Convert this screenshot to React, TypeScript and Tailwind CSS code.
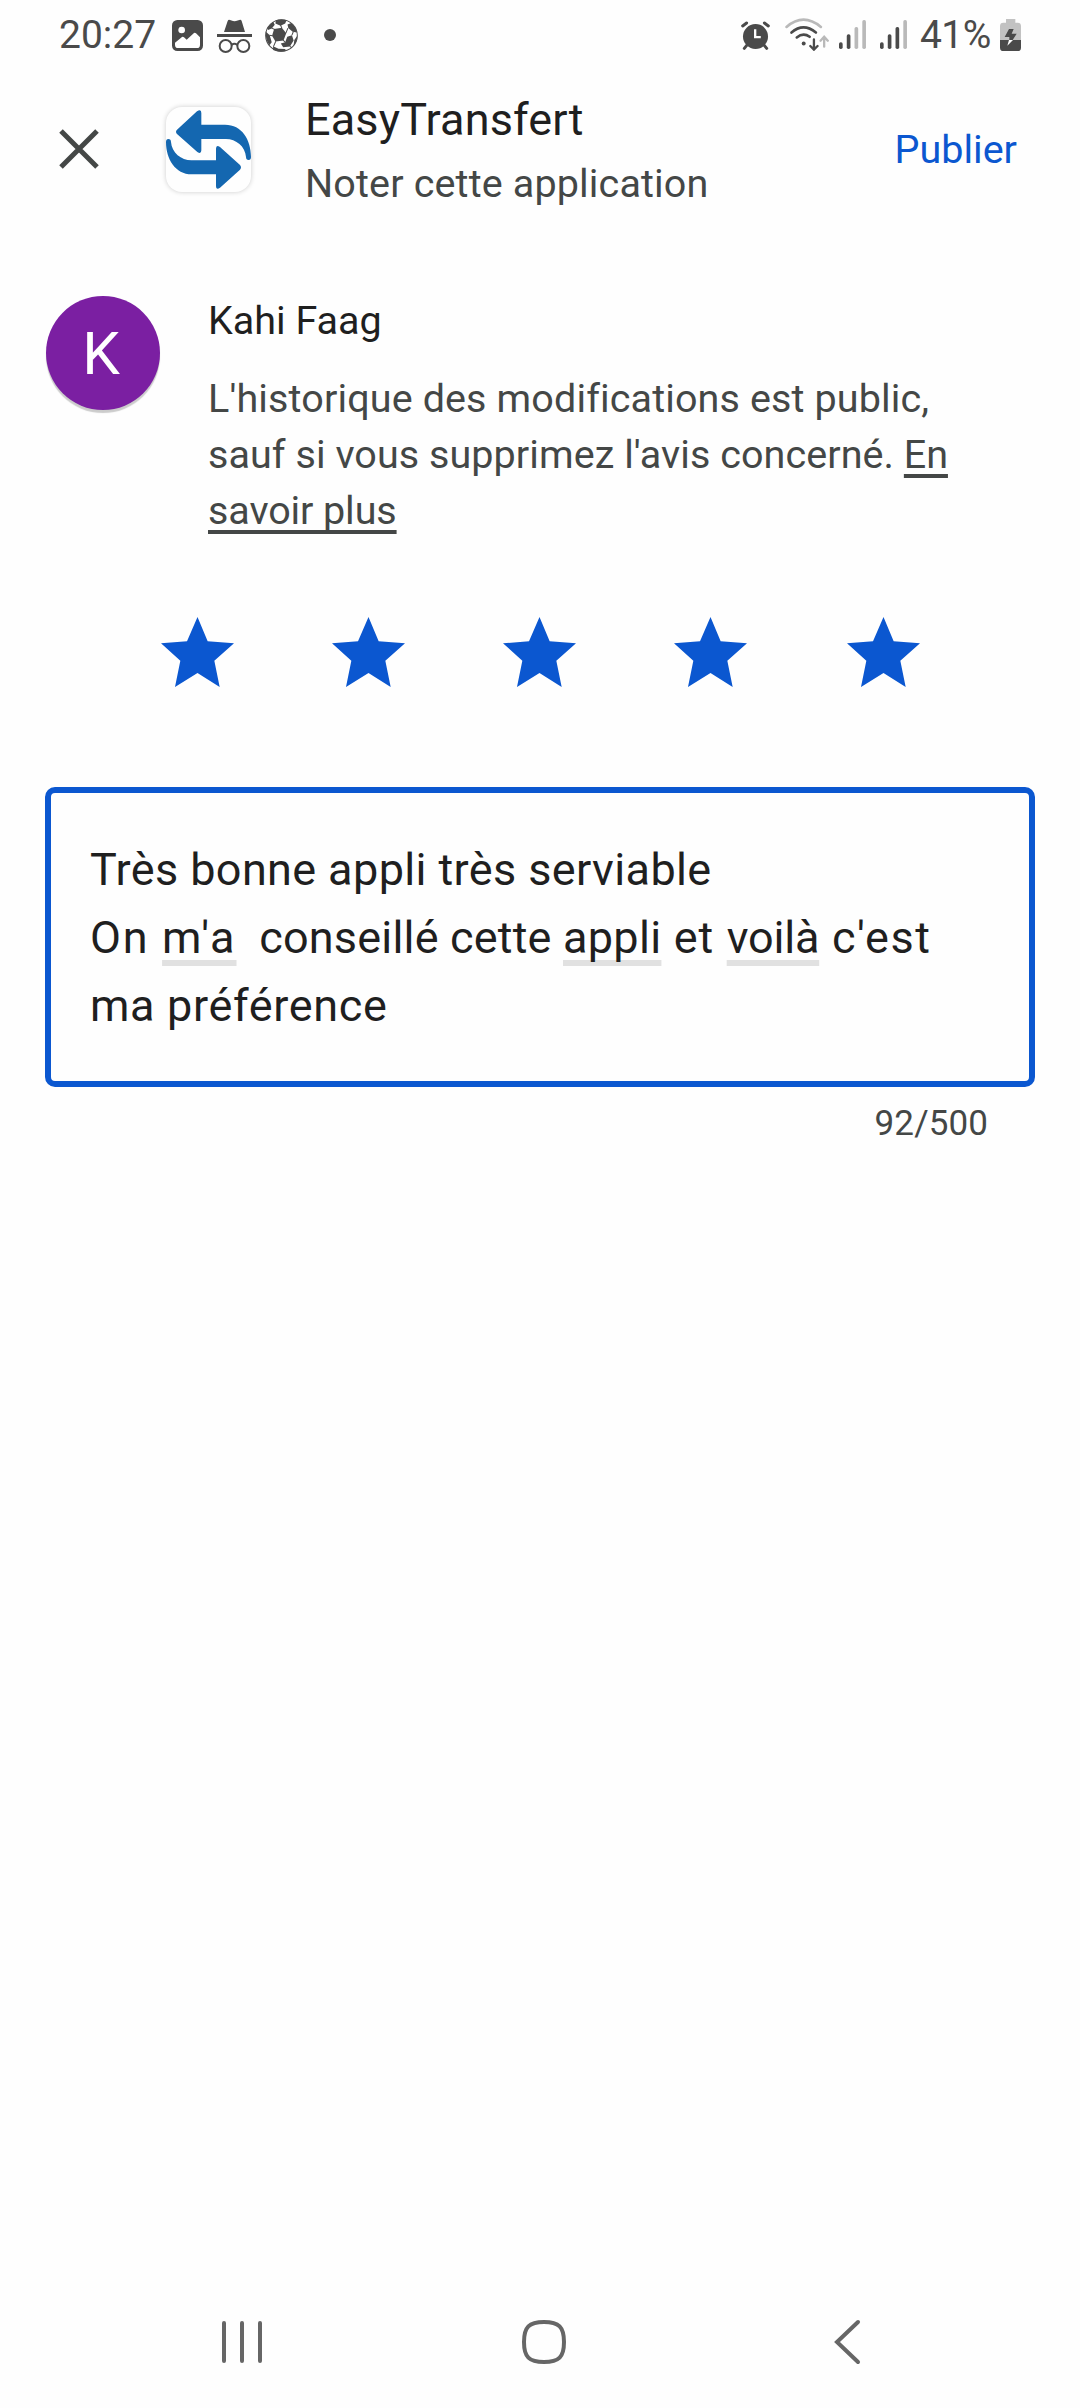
const StatusBar = () => {
  return (
    <div className="flex h-[70px] items-start justify-between pl-[59px] pr-[59px] text-[#4a4a4a]">
      <div className="flex items-start">
        <span className="mt-2.5 w-[113px] whitespace-nowrap text-[39px] leading-[50px]">20:27</span>
        {/* Picture */}
        <svg className="mt-5 h-[31px] w-[31px]" viewBox="0 0 93 93">
          <rect width="93" height="93" rx="16" fill="#4a4a4a" />
          <circle cx="29" cy="30" r="10" fill="white" />
          <path
            d="M9 68L30 51Q33 49 36 52L44 59L66 39Q69 37 72 40L84 52V74Q84 84 75 84H18Q9 84 9 74Z"
            fill="white"
          />
        </svg>
        {/* Incognito */}
        <svg className="ml-3.5 mt-[19px] h-[34px] w-[35px]" viewBox="0 0 105 102">
          <path
            d="M21 39L32 6Q34 1 39 3L48 6Q53 7 57 6L67 3Q72 1 74 6L84 39Z"
            fill="#4a4a4a"
          />
          <rect y="45" width="105" height="9" fill="#4a4a4a" />
          <g fill="none" stroke="#4a4a4a" strokeWidth="6">
            <circle cx="26" cy="81" r="18" />
            <circle cx="79" cy="81" r="18" />
            <path d="M44 78Q52 71 61 78" />
          </g>
        </svg>
        {/* Football */}
        <svg className="ml-[13px] mt-[19px] h-[33px] w-[33px]" viewBox="0 0 98 98">
          <circle cx="49" cy="49" r="47" fill="white" stroke="#4a4a4a" strokeWidth="3" />
          <g fill="#4a4a4a">
            <path d="M27 30L50 26L63 42L55 64L31 67L21 50Z" />
            <path d="M32 4Q48 -1 64 4L60 13L46 20L31 13Z" />
            <path d="M67 16L78 12Q92 24 95 40L82 38L69 27Z" />
            <path d="M66 53L80 48L85 64L74 82L54 84L47 73L60 69Z" />
            <path d="M2 37L14 48L20 69L13 78Q1 62 2 37Z" />
            <path d="M8 26Q15 14 25 9L29 17L20 28L9 33Z" />
            <path d="M24 81L40 88L60 89L62 95Q42 101 24 92Z" />
            <path d="M87 62L96 50Q96 66 85 79Z" />
          </g>
          <path
            d="M62 42L68 27M50 27L46 18M29 31L20 27M22 50L13 48M32 66L25 82M54 63L60 69M80 48L84 38M74 81L80 86"
            stroke="#4a4a4a"
            strokeWidth="3"
          />
        </svg>
        <span className="ml-[26px] mt-[29px] h-3 w-3 rounded-full bg-[#4a4a4a]" />
      </div>

      <div className="flex items-start">
        {/* Alarm */}
        <svg className="mt-[21px] h-[29px] w-[29px]" viewBox="0 0 88 86">
          <circle cx="44" cy="46" r="38" fill="#4a4a4a" />
          <path
            d="M5 14L17 5M71 5L83 14M18 72L10 82M70 72L78 82"
            stroke="#4a4a4a"
            strokeWidth="9"
            strokeLinecap="round"
          />
          <path d="M43 24V48H60" fill="none" stroke="white" strokeWidth="7" />
        </svg>
        {/* Wi-Fi */}
        <svg className="ml-[15px] mt-[18px] h-[33px] w-[44px]" viewBox="0 0 132 100">
          <g fill="none" strokeWidth="8" strokeLinecap="round">
            <path d="M4 27Q55 -17 108 27" stroke="#b9b9b9" />
            <path d="M19 44Q55 13 93 44" stroke="#4a4a4a" />
            <path d="M35 59Q55 43 74 57" stroke="#4a4a4a" />
            <path d="M118 87V58M107 69L118 57L129 69" stroke="#b9b9b9" strokeWidth="7" />
            <path d="M87 65V95M76 85L87 96L98 85" stroke="#4a4a4a" strokeWidth="7" />
          </g>
          <circle cx="56" cy="77" r="6" fill="#4a4a4a" />
        </svg>
        <SignalBars strong={2} className="ml-2.5" />
        <SignalBars strong={3} className="ml-3.5" />
        <span className="ml-[13px] mt-2.5 w-[80px] whitespace-nowrap text-[39px] leading-[50px] tracking-[-0.6px]">
          41%
        </span>
        {/* Battery */}
        <svg className="mt-[19px] h-8 w-[21px]" viewBox="0 0 63 96">
          <path d="M18 0H46V11H53Q63 11 63 21V64H0V21Q0 11 10 11H18Z" fill="#c2c2c2" />
          <path d="M0 63H63V86Q63 96 53 96H10Q0 96 0 86Z" fill="#4a4a4a" />
          <path d="M27 30H41L35 44H50L38 63H28V54H14Z" fill="#4a4a4a" />
          <path d="M27 63H39L22 80Z" fill="white" />
        </svg>
      </div>
    </div>
  );
};

interface SignalBarsProps {
  strong: number;
  className: string;
}

const SignalBars = ({ strong, className }: SignalBarsProps) => {
  const tops = [67, 43, 21, 0];

  return (
    <svg className={`mt-5 h-[29px] w-[27px] ${className}`} viewBox="0 0 81 87">
      {tops.map((top, i) => (
        <rect
          key={top}
          x={i * 23.3}
          y={top}
          width="11"
          height={87 - top}
          rx="5"
          fill={i < strong ? "#4a4a4a" : "#b9b9b9"}
        />
      ))}
    </svg>
  );
};

const Header = () => {
  return (
    <header className="flex h-[158px] items-center pl-[59px] pr-[63px]">
      <svg className="h-10 w-10" viewBox="0 0 40 40">
        <path d="M2 2L38 38M38 2L2 38" stroke="#444746" strokeWidth="5" />
      </svg>
      {/* App logo */}
      <div className="ml-[67px] h-[85px] w-[85px] overflow-hidden rounded-[16px] shadow-[0_0_5px_rgba(0,0,0,0.2)]">
        <svg viewBox="0 0 255 255" fill="#1467b0">
          <path d="M33 68L93 13Q106 4 106 18V53H177C228 53 255 98 255 150Q255 159 248 159Q240 159 240 150C238 118 210 96 180 96H106V130Q106 143 94 135L33 81Q27 74 33 68Z" />
          <path d="M222 188L162 242Q150 250 150 236V202H77C28 202 0 156 0 105Q0 96 7 96Q15 96 15 105C17 137 46 160 76 160H150V125Q150 112 162 120L222 174Q228 181 222 188Z" />
        </svg>
      </div>
      <div className="ml-[54px] flex-1 pt-[5px] leading-[64px]">
        <h1 className="text-[45px] tracking-[0.15px] text-[#1f1f1f]">EasyTransfert</h1>
        <p className="text-[39.5px] tracking-[0.15px] text-[#444746]">Noter cette application</p>
      </div>
      <button className="pt-0.5 text-[39.5px] leading-[60px] text-[#0b57d0]">Publier</button>
    </header>
  );
};

const UserInfo = () => {
  return (
    <section className="flex gap-12 pl-[46px] pt-[65px]">
      <div className="mt-[3px] flex h-[114px] w-[114px] items-center justify-center rounded-full bg-[#7b1fa2] pr-1 pt-0.5 text-[60px] text-white shadow-[0_3px_1px_rgba(0,0,0,0.2)]">
        K
      </div>
      <div className="whitespace-nowrap text-[39.5px] leading-[56px]">
        <h2 className="mb-[22px] text-[#1f1f1f]">Kahi Faag</h2>
        <p className="text-[#444746]">
          <span className="tracking-[0.13px] [font-variant-ligatures:common-ligatures]">
            L'historique des modifications est public,
          </span>
          <br />
          <span className="tracking-[0.06px]">sauf si vous supprimez l'avis concerné. </span>
          <a className="tracking-[-0.1px] underline decoration-4 underline-offset-[6px] [text-decoration-skip-ink:none]">
            En
            <br />
            savoir plus
          </a>
        </p>
      </div>
    </section>
  );
};

const Stars = () => {
  return (
    <div className="mt-[78px] flex gap-[98px] pl-[161px]">
      {[1, 2, 3, 4, 5].map((star) => (
        <svg
          key={star}
          className="h-[70px] w-[73px] last:ml-0.5"
          viewBox="0 0 219 210"
          fill="#0b57d0"
        >
          <path d="M109.500 0L140 73L219 79L160 131L176 210L109.500 168L42 210L58 131L0 79L78 73Z" />
        </svg>
      ))}
    </div>
  );
};

const spellMark =
  "underline decoration-[#e1e1e1] decoration-[6px] underline-offset-[7px] [text-decoration-skip-ink:none]";

const ReviewBox = () => {
  return (
    <section className="mt-[100px] px-[45px]">
      <div className="h-[300px] whitespace-pre rounded-[10px] border-[6px] border-[#0b57d0] pl-[39px] pt-[43px] text-[45px] leading-[68px] text-[#1f1f1f]">
        <span className="tracking-[0.38px]">Très bonne appli très serviable</span>
        <br />
        <span className="tracking-[1.7px]">On </span>
        <span className={`${spellMark} tracking-[2px]`}>m'a</span>
        <span className="tracking-[0.18px]">{"  "}conseillé cette </span>
        <span className={`${spellMark} tracking-[0.3px]`}>appli</span>
        <span className="tracking-[1.1px]"> et </span>
        <span className={`${spellMark} tracking-[-0.2px]`}>voilà</span>
        <span className="tracking-[1.6px]"> c'est</span>
        <br />
        <span className="tracking-[0.65px]">ma préférence</span>
      </div>
      <p className="mt-[13px] pr-[47px] text-right text-[35px] leading-[48px] tracking-[0.1px] text-[#444746]">
        92/500
      </p>
    </section>
  );
};

const NavBar = () => {
  return (
    <nav className="mt-auto flex h-[132px] items-center pl-[222px]">
      <svg className="h-[46px] w-[40px]" viewBox="0 0 40 46" fill="none" stroke="#666" strokeWidth="4" strokeLinecap="round">
        <path d="M2 4V42M20 4V42M38 4V42" />
      </svg>
      <svg className="ml-[259px] h-[46px] w-[46px]" viewBox="0 0 46 46" fill="none" stroke="#666" strokeWidth="4">
        <path d="M23 3C38 3 43 8 43 23S38 43 23 43S3 38 3 23S8 3 23 3Z" />
      </svg>
      <svg className="ml-[266px] h-[46px] w-[28px]" viewBox="0 0 28 46" fill="none" stroke="#666" strokeWidth="4" strokeLinecap="round">
        <path d="M25 3L4 23L25 43" />
      </svg>
    </nav>
  );
};

const App = () => {
  return (
    <div className="flex h-[2408px] w-[1080px] flex-col bg-[#fefefe] font-[Roboto,sans-serif]">
      <StatusBar />
      <Header />
      <UserInfo />
      <Stars />
      <ReviewBox />
      <NavBar />
    </div>
  );
};

export default App;
